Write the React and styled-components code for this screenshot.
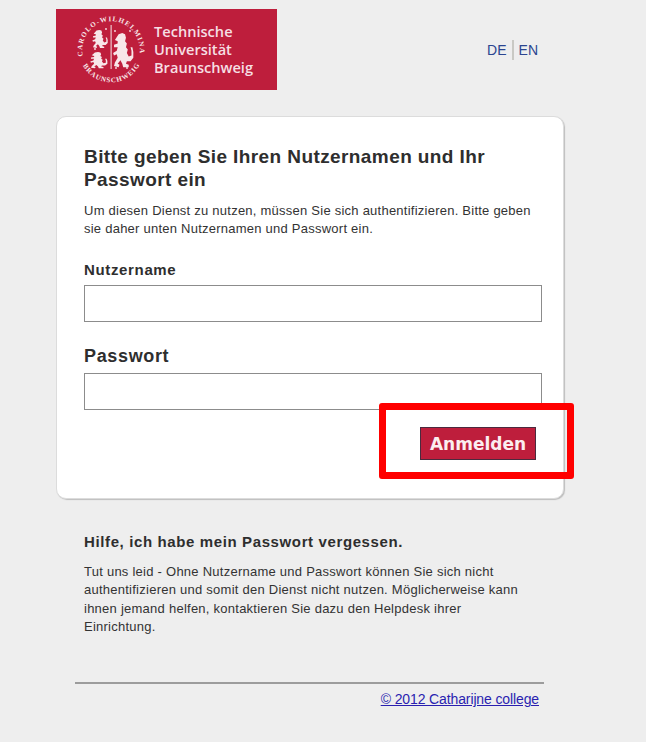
import React from "react";
import styled, { createGlobalStyle } from "styled-components";

const GlobalStyle = createGlobalStyle`
    html, body {
        margin: 0;
        padding: 0;
        background: #eeeeee;
        font-family: "Liberation Sans", Arial, sans-serif;
    }
`;

const Page = styled.div`
    width: 646px;
    height: 742px;
    box-sizing: border-box;
    padding: 9px 0 0 56px;
    overflow: hidden;
`;

const Header = styled.header`
    width: 482px;
    height: 81px;
    display: flex;
    justify-content: space-between;
    align-items: center;
`;

const Logo = styled.div`
    width: 221px;
    height: 81px;
    background: #be1e3c;
    display: flex;
    align-items: center;
    box-sizing: border-box;
    padding-left: 21px;
    gap: 9px;
`;

const LogoText = styled.div`
    color: #f6dfe3;
    font-family: "Open Sans", "Noto Sans", sans-serif;
    font-size: 14.6px;
    font-weight: 600;
    line-height: 18px;
    margin-top: -1px;
`;

const Languages = styled.nav`
    display: flex;
    align-items: center;
    font-size: 14px;
    margin-top: 1px;
`;

const LangLink = styled.a`
    color: #2b4590;
    padding: ${(p) => (p.$last ? "0 0 0 5px" : "0 5px 0 0")};
    line-height: 20px;
    border-left: ${(p) => (p.$last ? "2px solid #c9c9c4" : "none")};
`;

const Card = styled.main`
    position: relative;
    margin-top: 26px;
    width: 508px;
    height: 383px;
    box-sizing: border-box;
    padding: 28px 21px 0 27px;
    background: #fff;
    border: 1px solid #dcdcdc;
    border-radius: 10px;
    box-shadow: 1px 1px 1px #bdbdbd;
`;

const Title = styled.h1`
    margin: 0;
    font-size: 19px;
    line-height: 23px;
    font-weight: bold;
    letter-spacing: 0.41px;
    color: #2e2e2e;
`;

const Intro = styled.p`
    margin: 11px 0 0;
    font-size: 13px;
    line-height: 18px;
    letter-spacing: 0.24px;
    color: #333;
`;

const Label = styled.label`
    display: block;
    font-weight: bold;
    color: #2e2e2e;
    font-size: ${(p) => p.$size}px;
    line-height: 20px;
    margin-top: ${(p) => p.$top}px;
    margin-bottom: ${(p) => p.$bottom}px;
    letter-spacing: ${(p) => p.$spacing}px;
`;

const Field = styled.input`
    display: block;
    width: 458px;
    height: 37px;
    box-sizing: border-box;
    padding: 0 6px;
    background: #fff;
    border: 1px solid #8c8c8c;
    border-radius: 0;
    outline: none;
`;

const Actions = styled.div`
    display: flex;
    justify-content: flex-end;
    width: 452px;
    margin-top: 17px;
`;

const SubmitButton = styled.button`
    width: 116px;
    height: 33px;
    padding: 0;
    background: #be1e3c;
    border: 1px solid #4b2a3e;
    border-radius: 0;
    color: #fbeef0;
    font-family: "DejaVu Sans", Verdana, sans-serif;
    font-size: 17px;
    font-weight: bold;
`;

const Highlight = styled.div`
    position: absolute;
    left: 322px;
    top: 286px;
    width: 195px;
    height: 76px;
    box-sizing: border-box;
    border: 7px solid #ff0000;
    border-radius: 3px;
    pointer-events: none;
`;

const Help = styled.section`
    width: 440px;
    padding: 33px 0 0 28px;
`;

const HelpTitle = styled.h2`
    margin: 0;
    font-size: 15px;
    line-height: 20px;
    font-weight: bold;
    letter-spacing: 0.62px;
    color: #2e2e2e;
`;

const HelpText = styled.p`
    margin: 11px 0 0;
    font-size: 13px;
    line-height: 18.3px;
    letter-spacing: 0.25px;
    color: #333;
`;

const Footer = styled.footer`
    margin: 46px 0 0 19px;
    width: 469px;
    border-top: 2px solid #9c9c9c;
    padding: 6px 5px 0 0;
    box-sizing: border-box;
    text-align: right;
    font-size: 14px;
    line-height: 18px;
    letter-spacing: -0.12px;
`;

const FooterLink = styled.a`
    color: #2a1fb0;
    text-decoration: underline;
`;

const LION = "M5 1l4-1 3 1 1 3-1 3 2 2-1 3 2 2-1 3 2 3 3-1 0-4-1-3 2 0 1 4 0 5-3 3-4 0-1 2 3 1 0 2-6 0-1-3-2-3-3 3 2 1-1 2-5-1 1-3 3-4-1-3-3 1-1-2 4-2 1-3-4 0 0-2 4-1 0-2-3-1z";

const Seal = () => (
    <svg width="68" height="68" viewBox="0 0 68 68" fill="#f8e6e9" style={{ flex: "none" }}>
        <defs>
            <path id="sealTop" d="M 7 44 A 28.8 28.8 0 1 1 61 44" />
            <path id="sealBottom" d="M 3.5 44 A 32 32 0 0 0 64.5 44" />
        </defs>
        <text fontFamily="Liberation Serif, serif" fontSize="7" fontWeight="bold" letterSpacing="1.1">
            <textPath href="#sealTop" startOffset="4">CAROLO-WILHELMINA</textPath>
        </text>
        <text fontFamily="Liberation Serif, serif" fontSize="7" fontWeight="bold" letterSpacing="0.9">
            <textPath href="#sealBottom" startOffset="6">BRAUNSCHWEIG</textPath>
        </text>
        <rect x="33.6" y="9" width="1" height="44" />
        <path d={LION} transform="translate(16 14) scale(0.7 0.62)" />
        <path d={LION} transform="translate(14 36) scale(0.78 0.56)" />
        <path d={LION} transform="translate(37 17) scale(0.92 1.18)" />
        <circle cx="18" cy="33" r="0.9" />
        <circle cx="29" cy="13" r="0.9" />
        <circle cx="38" cy="15" r="0.9" />
        <circle cx="53" cy="15" r="0.9" />
        <circle cx="39" cy="52" r="0.9" />
        <circle cx="50" cy="52" r="0.9" />
    </svg>
);

const App = () => {
    return (
        <Page>
            <GlobalStyle />
            <Header>
                <Logo>
                    <Seal />
                    <LogoText>
                        Technische
                        <br />
                        Universität
                        <br />
                        Braunschweig
                    </LogoText>
                </Logo>
                <Languages>
                    <LangLink>DE</LangLink>
                    <LangLink $last>EN</LangLink>
                </Languages>
            </Header>
            <Card>
                <Title>Bitte geben Sie Ihren Nutzernamen und Ihr Passwort ein</Title>
                <Intro>
                    Um diesen Dienst zu nutzen, müssen Sie sich authentifizieren. Bitte geben sie daher unten Nutzernamen und Passwort ein.
                </Intro>
                <Label $size={15} $top={22} $bottom={5} $spacing={0.65}>Nutzername</Label>
                <Field type="text" />
                <Label $size={18} $top={24} $bottom={7} $spacing={0.65}>Passwort</Label>
                <Field type="password" />
                <Actions>
                    <SubmitButton>Anmelden</SubmitButton>
                </Actions>
                <Highlight />
            </Card>
            <Help>
                <HelpTitle>Hilfe, ich habe mein Passwort vergessen.</HelpTitle>
                <HelpText>
                    Tut uns leid - Ohne Nutzername und Passwort können Sie sich nicht authentifizieren und somit den Dienst nicht nutzen. Möglicherweise kann ihnen jemand helfen, kontaktieren Sie dazu den Helpdesk ihrer Einrichtung.
                </HelpText>
            </Help>
            <Footer>
                <FooterLink href="#">© 2012 Catharijne college</FooterLink>
            </Footer>
        </Page>
    );
};

export default App;
